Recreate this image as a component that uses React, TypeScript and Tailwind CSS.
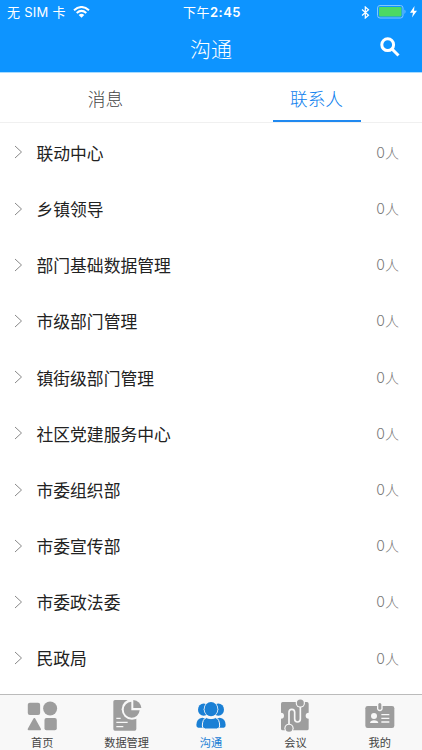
import React from "react";

const rows = ["联动中心", "乡镇领导", "部门基础数据管理", "市级部门管理", "镇街级部门管理", "社区党建服务中心", "市委组织部", "市委宣传部", "市委政法委", "民政局"];

const HomeIcon = () => (
  <g>
    <rect x="11.4" y="17" width="37" height="37" rx="6" />
    <circle cx="78.4" cy="34.5" r="21" />
    <path d="M31 66L48 97H14Z" stroke="currentColor" strokeWidth="6" strokeLinejoin="round" />
    <rect x="61.4" y="63" width="37" height="37" rx="6" />
  </g>
);

const DataIcon = () => (
  <g>
    <path d="M18 9H82V96Q82 101 77 101H18Q13 101 13 96V14Q13 9 18 9Z" />
    <circle cx="69" cy="37" r="31" fill="#f8f8f8" />
    <path d="M67 14A24 24 0 1 0 92 40H67Z" />
    <path d="M73 9A25 25 0 0 1 97 33H73Z" />
    <path d="M22 64H35M22 76H56M22 89H43" stroke="#f8f8f8" strokeWidth="4" />
  </g>
);

const ChatIcon = () => (
  <g>
    <ellipse cx="32" cy="38" rx="17" ry="18.500" />
    <ellipse cx="76" cy="38" rx="17" ry="18.500" />
    <path d="M28 62Q10 65 10 84Q10 92 16 92H92Q98 92 98 84Q98 65 80 62Q54 72 28 62Z" />
    <ellipse cx="54" cy="36.500" rx="22" ry="23" fill="#f8f8f8" />
    <ellipse cx="54" cy="36.500" rx="19.500" ry="21.500" />
    <path d="M40 62Q54 68 68 62Q80 66 80 87Q80 96 70 96H38Q28 96 28 87Q28 66 40 62Z" stroke="#f8f8f8" strokeWidth="3" />
  </g>
);

const MeetingIcon = () => (
  <g>
    <path d="M17 15H90Q95 15 95 20V47A9 9 0 0 0 95 65V95Q95 100 90 100H17Q12 100 12 95V65A9 9 0 0 0 12 47V20Q12 15 17 15Z" />
    <circle cx="70" cy="18" r="14" fill="#f8f8f8" />
    <circle cx="36" cy="94" r="14" fill="#f8f8f8" />
    <path d="M36 86V46Q36 37 44.500 37Q53 37 53 46V66Q53 75 61.500 75Q70 75 70 66V24" fill="none" stroke="#f8f8f8" strokeWidth="5" />
    <circle cx="70" cy="18" r="10.500" />
    <circle cx="36" cy="94" r="10.500" />
  </g>
);

const MineIcon = () => (
  <g>
    <rect x="10" y="27" width="87" height="66" rx="7" />
    <path d="M45 26H62V34A8.500 8.500 0 0 1 45 34Z" fill="#f8f8f8" />
    <rect x="49" y="18" width="9" height="20" rx="4.500" />
    <circle cx="36" cy="57" r="9" fill="#f8f8f8" />
    <path d="M24 78Q25 70 36 70Q48 70 49 78ZM58 51H82V55H58ZM58 62H82V66H58ZM58 73H82V77H58Z" fill="#f8f8f8" />
  </g>
);

const tabs = [
  { label: "首页", Icon: HomeIcon },
  { label: "数据管理", Icon: DataIcon },
  { label: "沟通", Icon: ChatIcon, active: true },
  { label: "会议", Icon: MeetingIcon },
  { label: "我的", Icon: MineIcon },
];

function StatusBar() {
  return (
    <div className="grid h-6 grid-cols-3 items-center text-[13px] leading-6">
      <div className="flex items-center gap-[7px] pl-[7px]">
        <span className="tracking-[0.25px]">无 SIM 卡</span>
        <svg width="17" height="12" viewBox="0 0 17 12" fill="none" stroke="white" strokeWidth="2">
          <path d="M1 4.300Q8.500-2.300 16 4.300M3.700 7Q8.500 2.800 13.300 7" />
          <path d="M5.700 8.900Q8.500 6.500 11.300 8.900L8.500 11.700Z" fill="white" stroke="none" />
        </svg>
      </div>
      <div className="pl-[2px] text-center tracking-[0.45px]">下午<span className="font-semibold">2:45</span></div>
      <div className="flex items-center justify-end pr-[5px]">
        <svg width="9" height="13" viewBox="0 0 9 13" fill="none" stroke="white" strokeWidth="1.200">
          <path d="M1 3.500L7.500 9.200L4.300 12V1L7.500 3.800L1 9.500" />
        </svg>
        <svg className="ml-[7px]" width="30" height="14" viewBox="0 0 30 14">
          <rect x="0.500" y="0.500" width="25.500" height="12.500" rx="2.500" fill="none" stroke="#80c7ff" />
          <rect x="2" y="2" width="22.500" height="9.500" rx="1" fill="#4cd964" />
          <path d="M27.500 4.500Q29.500 6.700 27.500 9Z" fill="#80c7ff" />
        </svg>
        <svg className="ml-[3px]" width="7" height="12" viewBox="0 0 7 12" fill="white">
          <path d="M4.500 0L0 6.700H3L2 11.500L7 4.700H4Z" />
        </svg>
      </div>
    </div>
  );
}

export default function App() {
  return (
    <div className="flex h-[750px] w-full flex-col overflow-hidden bg-white font-['Inter','Noto_Sans_CJK_SC',sans-serif]">
      <header className="h-[72px] shrink-0 bg-[#0d94ff] text-white">
        <StatusBar />
        <div className="grid h-12 grid-cols-3 items-center">
          <span />
          <h1 className="pt-[2px] text-center text-[21px] leading-[48px] font-light">沟通</h1>
          <svg className="mr-[22px] mb-[4px] justify-self-end" width="20" height="20" viewBox="0 0 20 20" fill="none" stroke="white" strokeWidth="3">
            <circle cx="7.700" cy="7.700" r="5.900" />
            <path d="M12 12L18.500 18.500" />
          </svg>
        </div>
      </header>
      <div className="grid h-[51px] shrink-0 grid-cols-2 border-t border-b border-t-[#a9dcff] border-b-[#f0f0f0] text-center text-[17.700px] leading-[53px] font-light">
        <div className="text-[#444]">消息</div>
        <div className="flex justify-center text-[#0d80ee]">
          <div className="h-[49px] w-[88px] border-b-2 border-[#2089f0]">联系人</div>
        </div>
      </div>
      <ul className="min-h-0 flex-1 overflow-hidden pt-[1.800px]">
        {rows.map((name) => (
          <li key={name} className="flex h-[56.200px] items-center pr-[23px] pl-[14px]">
            <svg className="mb-px" width="9" height="14" viewBox="0 0 9 14" fill="none" stroke="#888" strokeWidth="1">
              <path d="M1 1L7.500 7L1 13" />
            </svg>
            <span className="ml-[13.500px] flex-1 pt-[1.800px] text-[16.800px] leading-6 text-[#222]">{name}</span>
            <span className="text-[14px] leading-5 font-light text-[#777]">0人</span>
          </li>
        ))}
      </ul>
      <nav className="grid h-14 shrink-0 grid-cols-5 border-t border-[#bbb] bg-[#f8f8f8]">
        {tabs.map(({ label, Icon, active }) => (
          <div key={label} className={active ? "flex flex-col items-center pt-[2px] text-[#1b80d5]" : "flex flex-col items-center pt-[2px] text-[#9d9d9d]"}>
            <svg width="36" height="36" viewBox="0 0 108 108" fill="currentColor">
              <Icon />
            </svg>
            <span className={active ? "text-[11.200px] leading-[20px]" : "text-[11.200px] leading-[20px] text-[#444]"}>{label}</span>
          </div>
        ))}
      </nav>
    </div>
  );
}
